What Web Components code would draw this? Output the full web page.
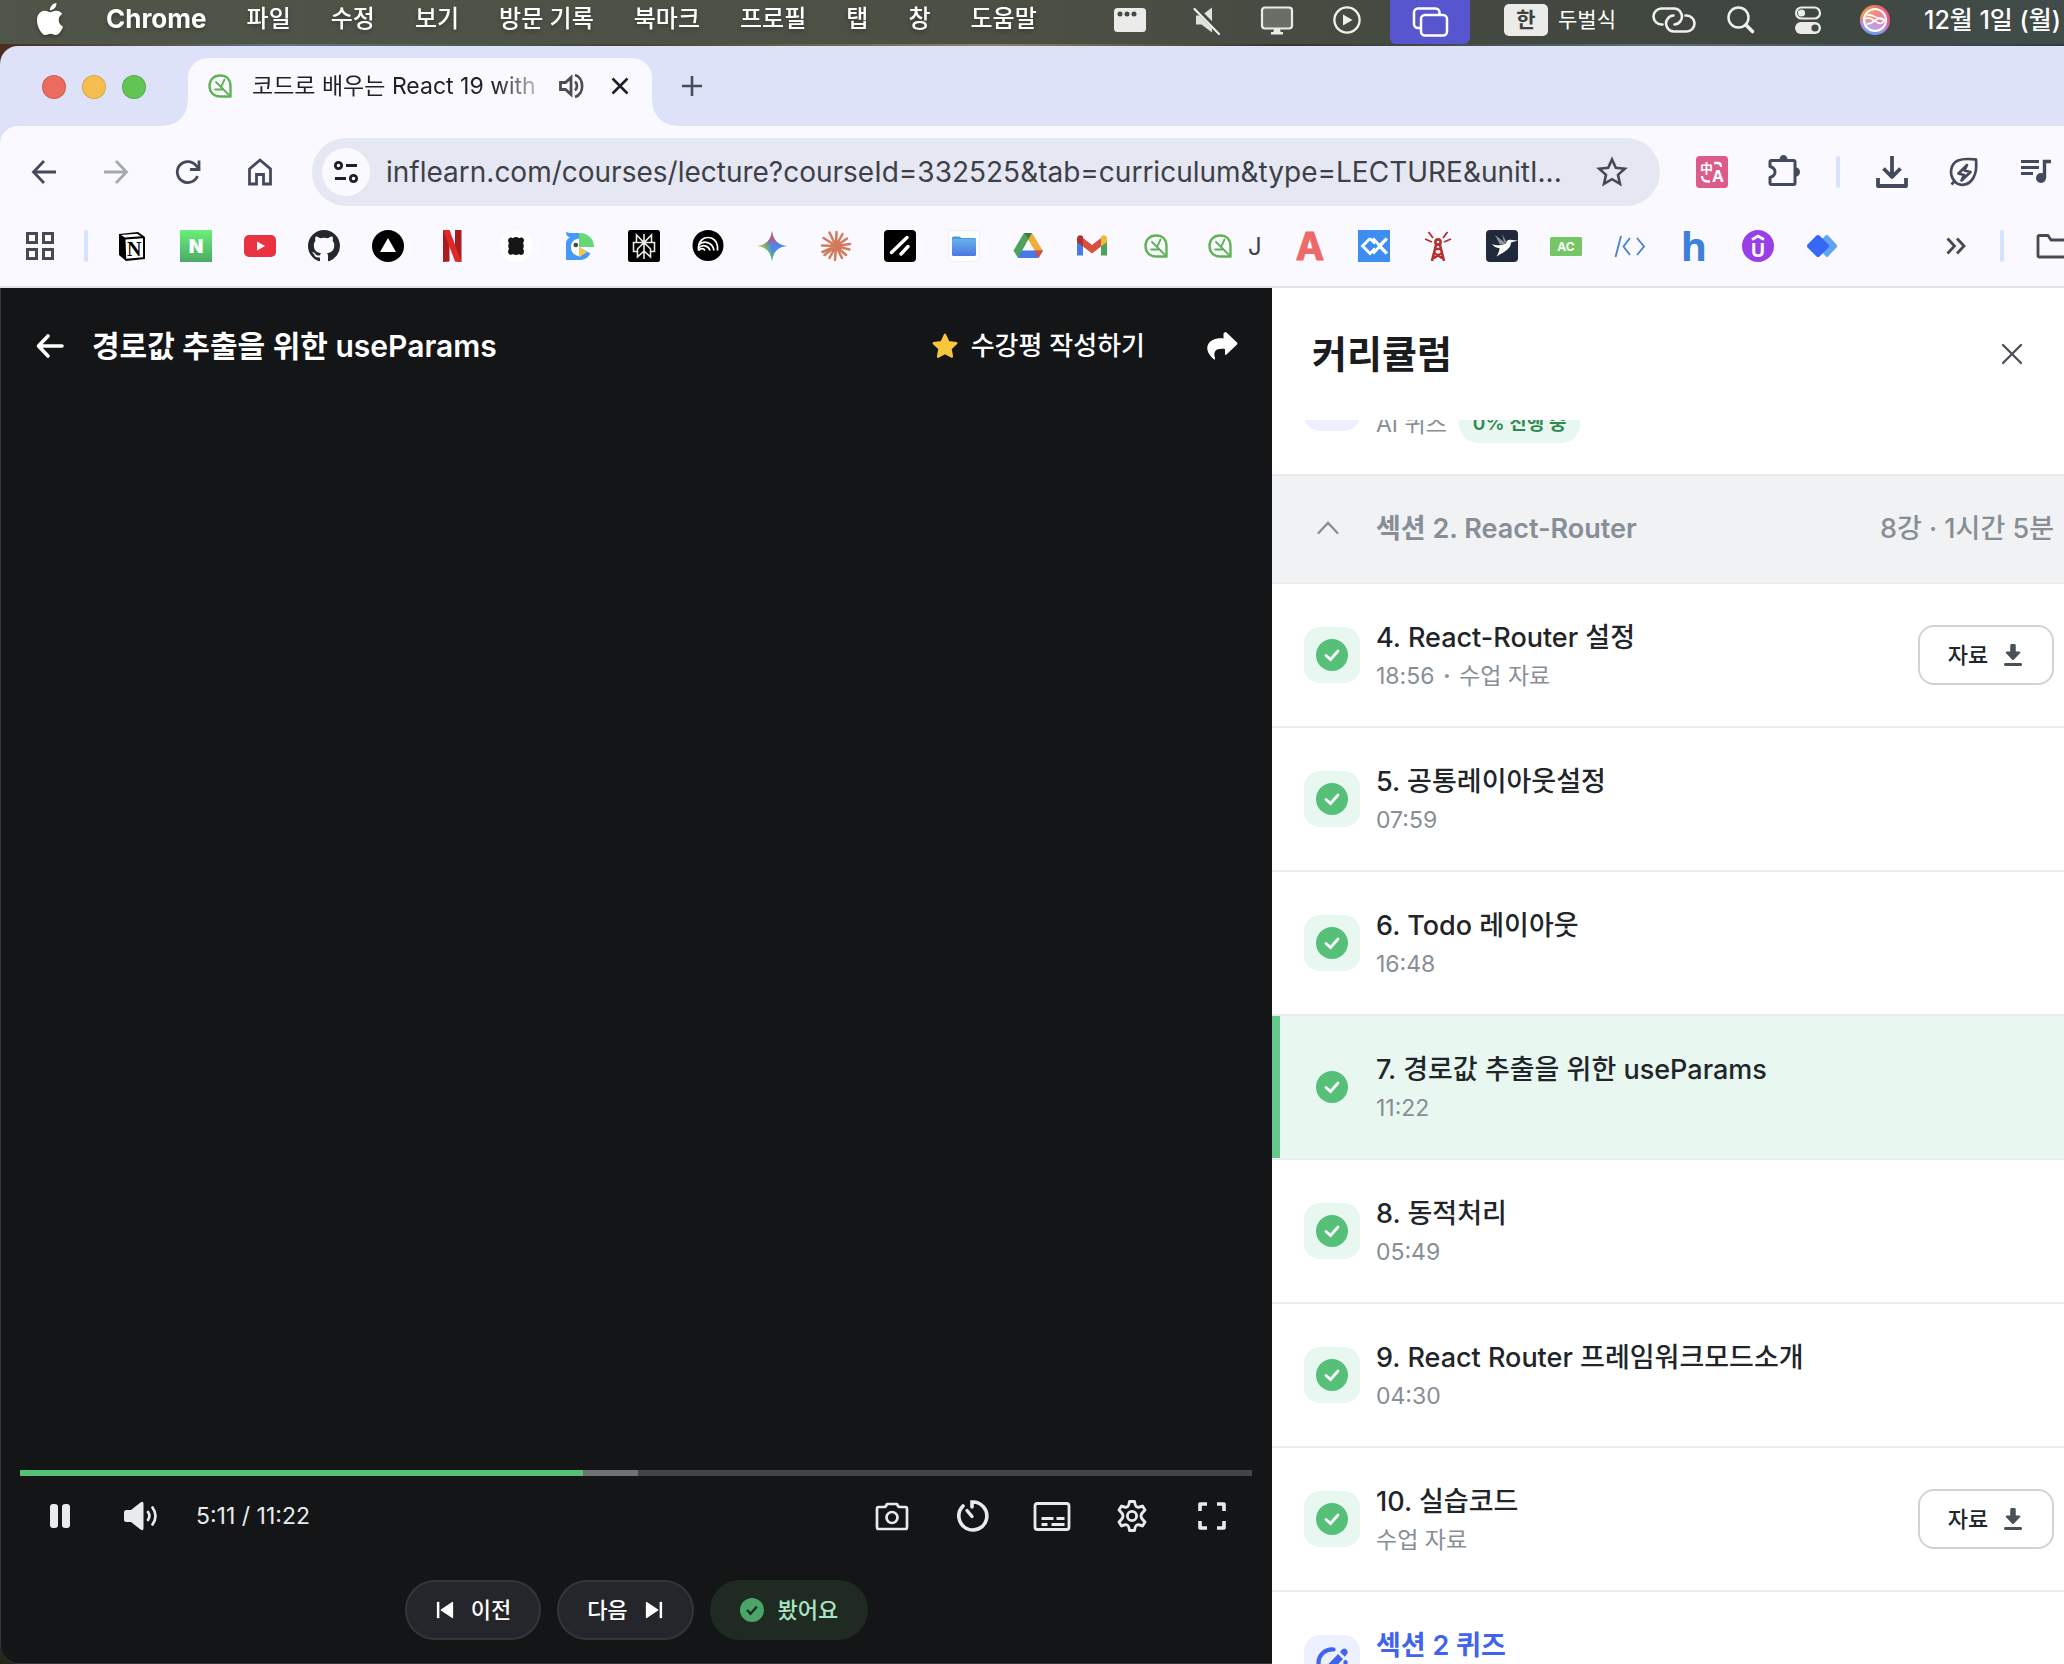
<!DOCTYPE html>
<html lang="ko">
<head>
<meta charset="utf-8">
<meta name="viewport" content="width=device-width, initial-scale=1">
<title>코드로 배우는 React 19 with</title>
<style>
  html, body { margin: 0; height: 100%; }
  body {
    overflow: hidden;
    display: flex;
    flex-direction: column;
    font-family: Inter, "Noto Sans CJK KR", sans-serif;
    background: linear-gradient(90deg, #4a2d20, #63757c 14%, #3c4630 30%, #8c8468 48%, #33352c 62%, #5f6c70 80%, #2c3c44) top / 100% 60px no-repeat, #202b17;
  }
</style>
</head>
<body>
<mac-menubar></mac-menubar>
<browser-window>
  <tab-strip slot="chrome"></tab-strip>
  <nav-toolbar slot="chrome"></nav-toolbar>
  <bookmark-bar slot="chrome"></bookmark-bar>
  <lecture-player heading="경로값 추출을 위한 useParams" current="5:11" total="11:22"></lecture-player>
  <curriculum-panel heading="커리큘럼">
    <lecture-row kind="quiz" meta="AI 퀴즈" badge="0% 진행 중"></lecture-row>
    <section-row heading="섹션 2. React-Router" info="8강 · 1시간 5분"></section-row>
    <lecture-row heading="4. React-Router 설정" meta="18:56 · 수업 자료" file></lecture-row>
    <lecture-row heading="5. 공통레이아웃설정" meta="07:59"></lecture-row>
    <lecture-row heading="6. Todo 레이아웃" meta="16:48"></lecture-row>
    <lecture-row heading="7. 경로값 추출을 위한 useParams" meta="11:22" active></lecture-row>
    <lecture-row heading="8. 동적처리" meta="05:49"></lecture-row>
    <lecture-row heading="9. React Router 프레임워크모드소개" meta="04:30"></lecture-row>
    <lecture-row heading="10. 실습코드" meta="수업 자료" file></lecture-row>
    <lecture-row kind="quiz" heading="섹션 2 퀴즈"></lecture-row>
  </curriculum-panel>
</browser-window>

<script>
const base = `
  :host, *, *::before, *::after { box-sizing: border-box; }
  button, a, input { font: inherit; color: inherit; text-decoration: none; }
  button { border: 0; padding: 0; margin: 0; background: none; cursor: pointer; white-space: nowrap; }
`;

const leaf = `<g fill="none" stroke="#5fb254" stroke-width="2.4" stroke-linejoin="round" stroke-linecap="round">
  <path d="M26.500 26.500H16C9.500 26.500 5.500 22 5.500 16S9.500 5.500 16 5.500 26.500 9.500 26.500 16z"/>
  <path d="M26 26L12 12M17 17L20.500 9.500M11 19.500h8.500" stroke-width="1.800"/></g>`;

// every drawing sits on a 32 x 32 grid
const icons = {
  apple: `<g fill="#fff" transform="scale(1.3333)"><path d="M12.152 6.896c-.948 0-2.415-1.078-3.960-1.040-2.040.027-3.910 1.183-4.961 3.014-2.117 3.675-.546 9.103 1.519 12.090 1.013 1.454 2.208 3.090 3.792 3.039 1.520-.065 2.090-.987 3.935-.987 1.831 0 2.350.987 3.960.948 1.637-.026 2.676-1.480 3.676-2.948 1.156-1.688 1.636-3.325 1.662-3.415-.039-.013-3.182-1.221-3.220-4.857-.026-3.040 2.480-4.494 2.597-4.559-1.429-2.090-3.623-2.324-4.390-2.376-2-.156-3.675 1.090-4.610 1.090zM15.530 3.830c.843-1.012 1.400-2.427 1.245-3.830-1.207.052-2.662.805-3.532 1.818-.780.896-1.454 2.338-1.273 3.714 1.338.104 2.715-.688 3.559-1.701"/></g>`,
  panel: `<rect y="4" width="32" height="24" rx="3.500" fill="#ebebe9"/><g fill="#444a41"><circle cx="6" cy="10" r="2.500"/><circle cx="13" cy="10" r="2.500"/><circle cx="20" cy="10" r="2.500"/></g>`,
  mute: `<path d="M5 11.500h5.500L21 3.500v25l-10.500-8H5z" fill="#e0e1de"/><path d="M5.500 5L29 29" stroke="#454a42" stroke-width="5"/><path d="M3.500 5L28 30" stroke="#f0f0ee" stroke-width="2.200" stroke-linecap="round"/>`,
  display: `<rect x="1" y="3.500" width="30" height="21" rx="3" fill="#6a6e67" stroke="#ebebe9" stroke-width="2.200"/><path d="M13 25h6l.6 3H22v2.500H10V28h2.400z" fill="#ebebe9"/>`,
  play: `<circle cx="16" cy="16" r="12.600" fill="none" stroke="#f0f0ee" stroke-width="2.300"/><path d="M12 10.500v11l9.500-5.500z" fill="#f0f0ee"/>`,
  windows: `<g fill="none" stroke="#fff" stroke-width="2.500"><path d="M7 22H4a4 4 0 0 1-4-4V6.500A4 4 0 0 1 4 2.500h17.500A4 4 0 0 1 25.500 6.500V9"/><rect x="7" y="9" width="26" height="20.500" rx="4"/></g>`,
  link: `<g fill="none" stroke="#f0f0ee" stroke-width="2.600" stroke-linecap="round"><path d="M4.500 20.500H3.500a8 8 0 0 1 0-16h12.500a8 8 0 0 1 6.500 12.500c-1.300 2-3.300 3.500-6 3.500"/><path d="M27.500 11.500h1a8 8 0 0 1 0 16H16A8 8 0 0 1 9.500 15c1.300-2 3.300-3.500 6-3.500"/></g>`,
  search: `<circle cx="13.500" cy="13.500" r="10" fill="none" stroke="#f0f0ee" stroke-width="2.500"/><path d="M21 21L27.500 27.500" stroke="#f0f0ee" stroke-width="3.600" stroke-linecap="round"/>`,
  toggles: `<rect x="4" y="3.500" width="24" height="11" rx="5.500" fill="none" stroke="#ebebe9" stroke-width="2.200"/><circle cx="9.500" cy="9" r="3.600" fill="#ebebe9"/><rect x="3" y="18" width="26" height="12" rx="6" fill="#ebebe9"/><circle cx="23" cy="24" r="3.600" fill="#444a41"/>`,
  siri: `<defs><linearGradient id="s" x1="0" y1="0" x2="1" y2=".3"><stop offset="0" stop-color="#f8a43c"/><stop offset=".6" stop-color="#ee6a6a"/><stop offset="1" stop-color="#f0508a"/></linearGradient><linearGradient id="b" x1=".2" y1="0" x2="0" y2="1"><stop offset=".35" stop-color="#a68cf0" stop-opacity="0"/><stop offset=".7" stop-color="#a68cf0"/><stop offset="1" stop-color="#35aef5"/></linearGradient></defs><circle cx="16" cy="16" r="15" fill="url(#s)"/><circle cx="16" cy="16" r="15" fill="url(#b)"/><circle cx="16" cy="16" r="11" fill="#fff" fill-opacity=".2" stroke="#fff" stroke-width="2.200"/><path d="M5.500 15c7-4 11 5 16 4.500 4-.5 4-5.500 0-5.500-5 0-8 7-14 6M8 11c6-1 9 4 18 5" fill="none" stroke="#fff" stroke-width="1.600"/>`,

  leaf,
  sound: `<path d="M4.500 12.500h5l5.500-5v17l-5.500-5h-5z" fill="none" stroke="#4a4c52" stroke-width="2.800" stroke-linejoin="miter"/><path d="M19 11.500c2.600 2 2.600 7 0 9M19 5c9.500 3 9.500 19 0 22" fill="none" stroke="#4a4c52" stroke-width="2.700"/>`,
  cross: `<path d="M8.500 8.500l15 15M23.500 8.500l-15 15" stroke="#1f2024" stroke-width="2.600"/>`,
  plus: `<path d="M16 6v20M6 16h20" stroke="#474b5c" stroke-width="2.600"/>`,
  back: `<path d="M28 16H6M16 5L5.500 16 16 27" fill="none" stroke="#424a5c" stroke-width="2.800"/>`,
  forward: `<path d="M4 16h22M16 5l10.500 11L16 27" fill="none" stroke="#a6a8b0" stroke-width="2.800"/>`,
  reload: `<path d="M25.500 20A10.500 10.500 0 1 1 24 9.500L26.500 12" fill="none" stroke="#424a5c" stroke-width="2.800"/><path d="M27 4.500v9H18" fill="none" stroke="#424a5c" stroke-width="2.800"/>`,
  home: `<path d="M5.500 13L16 4l10.500 9v15H19.500v-9.500h-7V28H5.500z" fill="none" stroke="#424a5c" stroke-width="2.800"/>`,
  tune: `<g fill="none" stroke="#1f2023" stroke-width="2.800"><circle cx="8.500" cy="9.500" r="3.200"/><path d="M16 9.500h11M5 22.500h11"/><circle cx="23.500" cy="22.500" r="3.200"/></g>`,
  star: `<path d="M16 3.500l3.800 8.400 9 .9-6.800 6.100 2 9L16 23.200 8 27.900l2-9-6.800-6.100 9-.9z" fill="none" stroke="#474a50" stroke-width="2.600"/>`,
  translate: `<rect width="32" height="32" rx="3.500" fill="#dd5b8b"/><g fill="#fff" font-weight="700" font-family="Noto Sans CJK KR"><text x="4" y="17" font-size="13">中</text><text x="16" y="26" font-size="16" font-family="Inter">A</text></g><path d="M18 7h4c2 0 3 1 3 4M6 20c0 4 2 5.500 6 5.500h2" fill="none" stroke="#fff" stroke-width="2.300"/>`,
  puzzle: `<path d="M3.500 4.500h22q1.500 0 1.500 1.500v21q0 1.500-1.500 1.500h-22q-1.500 0-1.500-1.500v-5.500q5-1.500 5-5.500t-5-5.500V6q0-1.500 1.500-1.500z" fill="none" stroke="#424a5c" stroke-width="3" stroke-linejoin="round"/><path d="M11.500 3.500a4 4.500 0 0 1 8 0zM28 11.500a4 4.500 0 0 1 0 9z" fill="#424a5c"/>`,
  download: `<path d="M16 0v20M7.500 12.500L16 21l8.500-8.500M2 22v8h28v-8" fill="none" stroke="#424a5c" stroke-width="3.800" stroke-linejoin="round"/>`,
  energy: `<path d="M6.500 25C1 19 2 8 10 4.500c6-2.500 13-1.500 18-1 .5 5 1 12-2.500 18C21 30 11 31 6.500 25zM7 24.500L3.500 28.500M19 9L10.500 17.500 16 19l-2.500 5.500L22.500 16l-6-1.500z" fill="none" stroke="#424a5c" stroke-width="2.700" stroke-linejoin="round"/>`,
  music: `<path d="M1 5.500h18M1 11.500h18M1 17.500h12" stroke="#424a5c" stroke-width="3"/><path d="M24.500 22V5.500H31" fill="none" stroke="#424a5c" stroke-width="3.400"/><circle cx="21" cy="22" r="5" fill="#424a5c"/>`,

  apps: `<g fill="none" stroke="#474a50" stroke-width="3"><rect x="3.500" y="3.500" width="9" height="9"/><rect x="19.500" y="3.500" width="9" height="9"/><rect x="3.500" y="19.500" width="9" height="9"/><rect x="19.500" y="19.500" width="9" height="9"/></g>`,
  notion: `<path d="M3 4l19-2 7 5v22l-19 2-7-6z" fill="#000"/><path d="M9.500 9.500L27 8.300v19L10.200 28.700z" fill="#fff"/><path d="M5 5l16-1.300 4 2.600-16 1.200z" fill="#fff"/><text x="11" y="25.500" font-family="Liberation Serif" font-weight="700" font-size="20" fill="#000">N</text>`,
  naver: `<defs><linearGradient id="g" x1="0" y1="0" x2="0" y2="1"><stop offset="0" stop-color="#6aef78"/><stop offset="1" stop-color="#4caa68"/></linearGradient></defs><rect width="32" height="32" fill="url(#g)"/><text x="16" y="23" text-anchor="middle" font-family="Inter" font-weight="900" font-size="19" fill="#fff">N</text>`,
  youtube: `<rect y="5" width="32" height="22" rx="5" fill="#ea3340"/><path d="M13 11.500v9l8-4.500z" fill="#fff"/>`,
  github: `<path transform="scale(2)" fill="#24292f" d="M8 0C3.580 0 0 3.580 0 8c0 3.540 2.290 6.530 5.470 7.590.4.070.55-.17.55-.38 0-.19-.01-.82-.01-1.490-2.010.37-2.530-.49-2.690-.94-.09-.23-.48-.94-.82-1.130-.28-.15-.68-.52-.01-.53.63-.01 1.080.58 1.230.82.72 1.210 1.870.87 2.330.66.07-.52.28-.87.51-1.070-1.780-.2-3.640-.89-3.640-3.950 0-.87.31-1.590.82-2.150-.08-.2-.36-1.020.08-2.120 0 0 .67-.21 2.200.82.64-.18 1.320-.27 2-.27s1.360.09 2 .27c1.530-1.040 2.200-.82 2.200-.82.44 1.100.16 1.920.08 2.120.51.56.82 1.270.82 2.150 0 3.070-1.870 3.750-3.650 3.950.29.25.54.73.54 1.480 0 1.070-.01 1.930-.01 2.200 0 .21.15.46.55.38A8.010 8.010 0 0 0 16 8c0-4.420-3.580-8-8-8z"/>`,
  vercel: `<circle cx="16" cy="16" r="16" fill="#000"/><path d="M16 8l8 14H8z" fill="#fff"/>`,
  netflix: `<path d="M7 0h6.500v31.500L7 32zM19 0h6.500v32L19 31.500z" fill="#a81b1f"/><path d="M7 0h6.500l12 32L19 31.300z" fill="#dd2a27"/>`,
  flower: `<circle cx="16" cy="16" r="16" fill="#fff"/><path d="M8.500 9c1-2 3-2 4.500-.8 1.500-1.500 4.500-1.500 6 0C20.500 7 23 7 23.700 9c.8 2-.2 3-.7 4 1 2 1 4 0 6 .8 1 1.500 3 .5 4.500-1.200 2-3.500 1.500-4.500.5-1.500 1.300-4.500 1.300-6 0-1.500 1.200-4 1-4.700-1-.6-1.600 0-3 .7-4-1-2-1-4 0-6-1-1-1.200-2.600-.5-4z" fill="#161616"/>`,
  parrot: `<path d="M2 2c4 1.500 8 1 13 1v14l11.500 6.500c-3 5-7 6.500-11.500 6.500H2V13c0-3 2-4.500 4-5.500C3.500 7 2 5 2 2z" fill="#4699fa"/><path d="M15.500 8.500C3.500 9 4.500 25.500 15.500 26z" fill="#fff"/><path d="M15 3c9 0 15 6 15 14H15z" fill="#66d874"/><path d="M15 17l8 5-8 5.500z" fill="#f6c545"/><circle cx="11.800" cy="15" r="2.300" fill="#3f4656"/>`,
  perplexity: `<rect width="32" height="32" rx="2.500" fill="#000"/><path d="M16 4v25M8.500 5v7.500h15V5L16 12.500zM9.500 21.500H5.500v-9h21v9h-4M16 12.500l-6.500 6.500v8l6.500-6 6.500 6v-8z" fill="none" stroke="#e8e8e4" stroke-width="1.600"/>`,
  arcs: `<circle cx="16" cy="15.500" r="15.500" fill="#000"/><g fill="none" stroke="#fff" stroke-width="1.700"><path d="M6.500 20.500v-4c1-12 18-12 19 0v4"/><path d="M6.500 15c5-5 14-3 15.500 5.500"/><path d="M6.500 18c4-4 10-2.500 11.500 2.500"/><path d="M6.500 20.500c2-2.500 5-2.500 6.500 0"/></g>`,
  gemini: `<defs><linearGradient id="m" x1=".1" y1=".7" x2=".9" y2=".4"><stop offset="0" stop-color="#f0c23b"/><stop offset=".32" stop-color="#6db27a"/><stop offset=".5" stop-color="#4a87ee"/><stop offset="1" stop-color="#4a87ee"/></linearGradient><linearGradient id="r" x1="0" y1="0" x2="0" y2="1"><stop offset=".1" stop-color="#e64a40"/><stop offset=".5" stop-color="#e64a40" stop-opacity="0"/><stop offset=".65" stop-color="#4fae62" stop-opacity="0"/><stop offset="1" stop-color="#4fae62"/></linearGradient></defs><path d="M16 1c1 9 6 14 15 15-9 1-14 6-15 15-1-9-6-14-15-15C10 15 15 10 16 1z" fill="url(#m)"/><path d="M16 1c1 9 6 14 15 15-9 1-14 6-15 15-1-9-6-14-15-15C10 15 15 10 16 1z" fill="url(#r)"/>`,
  claude: `<g stroke="#d17b5c" stroke-width="2.500" stroke-linecap="round"><path d="M16 16L16.500 2M16 16l6.500-12M16 16l11-7.500M16 16l14-2M16 16l13.500 3.500M16 16l10 9M16 16l6 12M16 16l-1 14M16 16l-6.500 12M16 16L4.500 25M16 16L2.500 22M16 16l-14-.5M16 16L3.500 8M16 16L9.500 2.500"/></g>`,
  slash: `<rect width="32" height="32" rx="4" fill="#000"/><path d="M7.500 22.500L23 7.500M17 24l7-7.500" stroke="#fff" stroke-width="3.400" stroke-linecap="round"/>`,
  files: `<rect x=".5" y=".5" width="31" height="31" rx="4" fill="#fff" stroke="#eeeef3"/><defs><linearGradient id="f" x1="0" y1="0" x2="0" y2="1"><stop offset="0" stop-color="#66b0ea"/><stop offset="1" stop-color="#4a78e2"/></linearGradient></defs><path d="M4 8a1.500 1.500 0 0 1 1.500-1.500h6L13.500 8h13A1.500 1.500 0 0 1 28 9.500V13H4z" fill="#4a9ad6"/><rect x="4" y="9" width="24" height="17" rx="1.500" fill="url(#f)"/>`,
  drive: `<path d="M12 3h8l11 18h-8z" fill="#eeae3d"/><path d="M12 3l4 7L6 28 1.500 20.500z" fill="#4da25c"/><path d="M9.500 20.500H31L26.500 28H6z" fill="#467be6"/><path d="M12 3h8l-4 7z" fill="#3a7d48"/><path d="M22.500 20.500H31L26.500 28z" fill="#d9503f"/>`,
  gmail: `<path d="M1 8v17.500h6V13z" fill="#467be6"/><path d="M31 8v17.500h-6V13z" fill="#4da25c"/><path d="M7 8l9 7 9-7v8.500l-9 7-9-7z" fill="#d9503f"/><path d="M1 9c0-4 3.500-4.500 6-2.500v10L1 12z" fill="#b3312c"/><path d="M31 9c0-4-3.500-4.500-6-2.500v10l6-4.500z" fill="#eeb93d"/>`,
  letter: `<text x="16" y="30" text-anchor="middle" font-family="Inter" font-weight="700" font-size="38" fill="#ee6a68" stroke="#ee6a68" stroke-linejoin="round">A</text>`,
  diamonds: `<rect width="32" height="32" fill="#3e8ef2"/><path d="M12 8.500L4.500 16l7.500 7.500 5-5M12 8.500l5 5M28.500 8.500L21 16l7.500 7.500M15 8.500l14 15M15 23.500l14-15" fill="none" stroke="#fff" stroke-width="2.800"/>`,
  tower: `<g stroke="#b3302f" fill="none" stroke-width="2.600"><path d="M14.500 13L10 31M17.500 13L22 31M13 19h6M12 23l8 5M20 23l-8 5"/><circle cx="16" cy="12" r="2.600"/><path d="M11 8L6.500 2M21 8l4.500-6M10 12L3 9M22 12l7-3" stroke-width="1.900"/></g>`,
  bird: `<rect width="32" height="32" rx="4" fill="#202a3c"/><path d="M6 14c4 2 9 1.500 14-.5 0-3 3-4.500 5.500-3.500l6.500.5-7 2c0 6-6 9-14.500 14 2-3.500 3-6 3-8.500-3 0-6-1.500-7.500-4z" fill="#fff"/><path d="M9 5l11 8.500-6 1zM16 4l5 9-3-1z" fill="#8e95a2"/>`,
  ac: `<rect y="7" width="32" height="19" rx="1.500" fill="#76c566"/><text x="16" y="21" text-anchor="middle" font-family="Inter" font-weight="700" font-size="12" fill="#fff">AC</text>`,
  code: `<path d="M7 6L1.500 27M16 8l-6.500 8.500L16 25M23 8l7 8.500L23 25" fill="none" stroke="#4a86cc" stroke-width="1.900"/>`,
  hlogo: `<text x="16" y="31" text-anchor="middle" font-family="Open Sans" font-weight="700" font-size="40" fill="#3d80d9">h</text>`,
  ulogo: `<circle cx="16" cy="16" r="16" fill="#983fe8"/><path d="M10 9.500L16 6l6 3.500" fill="none" stroke="#fff" stroke-width="2.800"/><text x="16" y="27" text-anchor="middle" font-family="Inter" font-weight="700" font-size="19" fill="#fff">U</text>`,
  gems: `<path d="M20 5q1-.5 2 .5l8.500 9q1 1.500 0 3l-8.500 9q-1 1-2 0l-5-5V10z" fill="#5ea4f0"/><path d="M10.500 5.500q1.500-1 3 0l9 9q1 1.500 0 3l-9 9q-1.500 1-3 0l-9-9q-1-1.500 0-3z" fill="#3668f5"/>`,
  more: `<path d="M7.500 8.500L14.500 16l-7 7.500M17 8.500L24 16l-7 7.500" fill="none" stroke="#474a50" stroke-width="2.800"/>`,
  folder: `<path d="M2 7q0-1.500 1.500-1.500H12l3 4.500h23v17H3.500Q2 27 2 25.500z" fill="none" stroke="#474a50" stroke-width="2.800" stroke-linejoin="round"/>`,

  arrow: `<path d="M28 16H5.500M14 6L4.500 16 14 26" fill="none" stroke="#fff" stroke-width="3.600" stroke-linecap="round" stroke-linejoin="round"/>`,
  rate: `<path d="M16 3l4 8.600 9 1.200-6.600 6.300 1.600 9.200L16 24l-8 4.300 1.600-9.200L3 12.800l9-1.200z" fill="#f8c63d" stroke="#f8c63d" stroke-width="2.500" stroke-linejoin="round"/>`,
  share: `<path d="M19.500 2.500q1-1 2 0L32 12.500q1 1 0 2L21.500 24.500q-1.500 1-1.500-.5v-5c-9-1-12 2-10 9 .5 1.500-.5 2-1.500 1C-4 18 4 7 18.500 8.500V3.500z" fill="#fff"/>`,
  pause: `<rect x="6" y="4" width="8" height="24" rx="3" fill="#e9eaee"/><rect x="18" y="4" width="8" height="24" rx="3" fill="#e9eaee"/>`,
  volume: `<path d="M2.500 10H7l9.500-7.500q3-2 3 1.500v24q0 3.500-3 1.500L7 22H2.500Q0 22 0 19.500v-7Q0 10 2.500 10z" fill="#e9eaee"/><path d="M24 12q2.800 4 0 8M28.500 7.500q6 8.500 0 17" fill="none" stroke="#e9eaee" stroke-width="2.700" stroke-linecap="round"/>`,
  camera: `<path d="M2.500 7H8q2 0 3-3h10q1 3 3 3h5.500q1.500 0 1.500 2v18q0 2-1.500 2H2.500Q1 29 1 27V9q0-2 1.500-2z" fill="none" stroke="#e9eaee" stroke-width="2.700" stroke-linejoin="round"/><circle cx="16" cy="17.500" r="5.500" fill="none" stroke="#e9eaee" stroke-width="2.700"/>`,
  timer: `<path d="M7 6A14 14 0 1 0 16 2v5" fill="none" stroke="#e9eaee" stroke-width="3.600" stroke-linecap="round"/><path d="M11 10.500l5 6" stroke="#e9eaee" stroke-width="3.400" stroke-linecap="round"/>`,
  caption: `<rect x="-1" y="3.500" width="34" height="26" rx="2.500" fill="none" stroke="#e9eaee" stroke-width="2.800"/><path d="M5.500 18.500h12M20.500 18.500h8M5.500 24.500h6M15.500 24.500h13" stroke="#e9eaee" stroke-width="2.800"/>`,
  gear: `<path d="M13.500 1.500h5q.8 5 2.500 5.500c1.500.8 3 0 5.500-1L29 10c-3.500 3.500-4 4-4 6s.5 2.500 4 6l-2.500 4c-2.500-1-4-1.800-5.500-1-1.700.5-2.500 5.500-2.500 5.500h-5S12.700 25.500 11 25c-1.500-.8-3 0-5.500 1L3 22c3.500-3.500 4-4 4-6s-.5-2.500-4-6l2.500-4c2.500 1 4 1.800 5.500 1 1.700-.5 2.500-5.500 2.500-5.500z" fill="none" stroke="#e9eaee" stroke-width="2.800" stroke-linejoin="round"/><circle cx="16" cy="16" r="4.600" fill="none" stroke="#e9eaee" stroke-width="2.800"/>`,
  full: `<path d="M4 11V4h7M21 4h7v7M28 21v7h-7M11 28H4v-7" fill="none" stroke="#e9eaee" stroke-width="3.600" stroke-linejoin="round"/>`,
  prev: `<path d="M5 3v26" stroke="#fff" stroke-width="4"/><path d="M28 4v24L10 16z" fill="#fff" stroke="#fff" stroke-width="2" stroke-linejoin="round"/>`,
  next: `<path d="M27 3v26" stroke="#fff" stroke-width="4"/><path d="M4 4v24l18-12z" fill="#fff" stroke="#fff" stroke-width="2" stroke-linejoin="round"/>`,
  seen: `<circle cx="16" cy="16" r="16" fill="#4aa567"/><path d="M9.500 16l4.500 5 8.500-9.500" fill="none" stroke="#1e2a22" stroke-width="3"/>`,
  check: `<circle cx="16" cy="16" r="16" fill="#56c078"/><path d="M10 16.500l4.500 4L22 12" fill="none" stroke="#fff" stroke-width="2.800" stroke-linecap="round"/>`,
  close: `<path d="M7 7l18 18M25 7L7 25" stroke="#4a4f57" stroke-width="2.300" stroke-linecap="round"/>`,
  up: `<path d="M6.500 20L16 10l9.500 10" fill="none" stroke="#868e96" stroke-width="2.300" stroke-linecap="round"/>`,
  save: `<path d="M12 2q0-2 2-2h4q2 0 2 2v9h5q3 0 1 2.500l-8.500 9q-1.500 1.500-3 0l-8.500-9Q4 11 7 11h5z" fill="#495057"/><rect x="3" y="27.500" width="26" height="4.500" rx="2" fill="#495057"/>`,
  quiz: `<path d="M17.500 2.500A13.500 13.500 0 1 0 29.500 15" fill="none" stroke="#4263eb" stroke-width="4.200" stroke-linecap="round"/><path d="M11.500 18L22 7l5 5-10.500 11-6 1.500zM24 5l2-2.500q2.500-2 4.500 0t.5 4.500L28.800 9.800z" fill="#4263eb"/>`
};

class UiIcon extends HTMLElement {
  constructor() {
    super();
    this.attachShadow({ mode: 'open' });
  }

  connectedCallback() {
    const size = this.getAttribute('size') || 32;
    this.shadowRoot.innerHTML = `
      <style>
        :host { display: block; flex: none; width: ${size}px; height: ${size}px; }
        svg { display: block; width: 100%; height: 100%; overflow: visible; }
      </style>
      <svg viewBox="0 0 32 32" aria-hidden="true">${icons[this.getAttribute('name')]}</svg>
    `;
  }
}

class MacMenubar extends HTMLElement {
  constructor() {
    super();
    this.attachShadow({ mode: 'open' });
  }

  connectedCallback() {
    const menus = ['파일', '수정', '보기', '방문 기록', '북마크', '프로필', '탭', '창', '도움말'];
    const cell = (name, label, cls = '') => `<button class="cell ${cls}" aria-label="${label}"><ui-icon name="${name}"></ui-icon></button>`;
    this.shadowRoot.innerHTML = `
      <style>
        ${base}
        :host {
          display: flex;
          flex: none;
          height: 44px;
          margin-bottom: 2px;
          overflow: hidden;
          color: #fff;
          font-size: 24px;
          font-weight: 500;
          line-height: 36px;
          background: linear-gradient(90deg, #50554a, #4b4f44 50%, #3f463f 85%, #414c4a);
        }
        nav, .status { display: flex; align-items: center; flex: none; }
        nav { padding-left: 34px; gap: 40px; height: 38px; }
        nav button, nav ui-icon { filter: drop-shadow(0 2px 2px rgba(0, 0, 0, .3)); }
        .app { font-size: 26px; font-weight: 700; }
        .status { margin-left: auto; height: 40px; }
        .cell { display: grid; place-items: center; width: 70px; height: 40px; }
        .first { width: 84px; }
        .near { width: 67px; }
        .share {
          width: 80px;
          height: 44px;
          margin: 0 34px 0 8px;
          align-self: flex-start;
          border-radius: 0 0 6px 6px;
          background: #5856ce;
        }
        .input { display: flex; align-items: center; gap: 10px; margin-right: 24px; font-size: 21px; font-weight: 400; }
        .input b { width: 44px; height: 32px; border-radius: 5px; line-height: 32px; background: #ebebe9; color: #3d423b; font-weight: 600; }
        .time { width: 156px; padding-left: 16px; overflow: hidden; text-align: left; font-size: 25px; }
      </style>
      <nav>
        <ui-icon name="apple"></ui-icon>
        <button class="app">Chrome</button>
        ${menus.map(m => `<button>${m}</button>`).join('')}
      </nav>
      <div class="status">
        ${cell('panel', '패널', 'first')}${cell('mute', '음소거')}${cell('display', '디스플레이')}${cell('play', '재생')}
        ${cell('windows', '화면 공유', 'share')}
        <button class="input"><b>한</b><span>두벌식</span></button>
        ${cell('link', '연결', 'near')}${cell('search', '검색', 'near')}${cell('toggles', '제어 센터', 'near')}${cell('siri', 'Siri', 'near')}
        <button class="time">12월 1일 (월)</button>
      </div>
    `;
  }
}

class BrowserWindow extends HTMLElement {
  constructor() {
    super();
    this.attachShadow({ mode: 'open' }).innerHTML = `
      <style>
        :host {
          display: flex;
          flex: 1;
          flex-direction: column;
          min-height: 0;
          overflow: hidden;
          border-radius: 18px 0 0 18px;
        }
        .page { display: flex; flex: 1; min-height: 0; border-top: 2px solid #e1e1ec; background: #141517; }
      </style>
      <slot name="chrome"></slot>
      <div class="page"><slot></slot></div>
    `;
  }
}

class TabStrip extends HTMLElement {
  constructor() {
    super();
    this.attachShadow({ mode: 'open' });
  }

  connectedCallback() {
    this.shadowRoot.innerHTML = `
      <style>
        ${base}
        :host { display: flex; flex: none; height: 80px; padding: 12px 0 0 42px; background: #dde2f8; }
        .lights { display: flex; gap: 16px; padding-top: 17px; width: 146px; flex: none; }
        .lights button { width: 24px; height: 24px; border-radius: 50%; border: 1px solid rgba(0, 0, 0, .12); }
        .red { background: #ec6a5e; }
        .yellow { background: #f4bf4f; }
        .green { background: #61c554; }
        .tab {
          position: relative;
          display: flex;
          align-items: center;
          width: 464px;
          height: 68px;
          padding: 0 16px 12px;
          border-radius: 20px 20px 0 0;
          background: #faf9ff;
        }
        .tab::before, .tab::after {
          content: "";
          position: absolute;
          bottom: 0;
          width: 24px;
          height: 24px;
          background: radial-gradient(circle at 0 0, transparent 23px, #faf9ff 24px);
        }
        .tab::before { right: 100%; }
        .tab::after { left: 100%; background: radial-gradient(circle at 100% 0, transparent 23px, #faf9ff 24px); }
        .name {
          flex: 1;
          min-width: 0;
          margin: 0 14px 0 16px;
          overflow: hidden;
          white-space: nowrap;
          font-size: 23px;
          line-height: 32px;
          color: #1f2024;
          -webkit-mask: linear-gradient(90deg, #000 84%, rgba(0, 0, 0, .2));
          mask: linear-gradient(90deg, #000 84%, rgba(0, 0, 0, .2));
        }
        .shut { margin-left: 16px; }
        .add { display: grid; place-items: center; width: 80px; height: 56px; }
      </style>
      <div class="lights">
        <button class="red" aria-label="닫기"></button>
        <button class="yellow" aria-label="최소화"></button>
        <button class="green" aria-label="확대"></button>
      </div>
      <div class="tab">
        <ui-icon name="leaf"></ui-icon>
        <span class="name">코드로 배우는 React 19 with</span>
        <ui-icon name="sound"></ui-icon>
        <button class="shut" aria-label="탭 닫기"><ui-icon name="cross"></ui-icon></button>
      </div>
      <button class="add" aria-label="새 탭"><ui-icon name="plus"></ui-icon></button>
    `;
  }
}

class NavToolbar extends HTMLElement {
  constructor() {
    super();
    this.attachShadow({ mode: 'open' });
  }

  connectedCallback() {
    const tool = (name, label) => `<button class="tool" aria-label="${label}"><ui-icon name="${name}"></ui-icon></button>`;
    this.shadowRoot.innerHTML = `
      <style>
        ${base}
        :host { display: block; flex: none; overflow: hidden; background: #dde2f8; }
        .bar {
          display: flex;
          align-items: center;
          width: calc(100% + 8px);
          padding: 12px 0 8px 8px;
          border-radius: 18px 0 0 0;
          background: #faf9ff;
        }
        .tool { display: grid; place-items: center; flex: none; width: 72px; height: 68px; }
        .url {
          display: flex;
          align-items: center;
          flex: 1;
          min-width: 0;
          height: 68px;
          margin: 0 16px;
          padding: 0 12px 0 10px;
          border-radius: 34px;
          background: #e5e8f2;
        }
        .site { display: grid; place-items: center; flex: none; width: 48px; height: 48px; border-radius: 50%; background: #faf9ff; }
        input {
          flex: 1;
          min-width: 0;
          height: 48px;
          margin: 0 8px 0 16px;
          padding: 0;
          border: 0;
          outline: 0;
          background: none;
          font-size: 28px;
          color: #3d4046;
        }
        i { flex: none; width: 4px; height: 32px; margin: 0 16px; border-radius: 2px; background: #d6e2fb; }
      </style>
      <div class="bar">
        ${tool('back', '뒤로')}${tool('forward', '앞으로')}${tool('reload', '새로고침')}${tool('home', '홈')}
        <div class="url">
          <button class="site" aria-label="사이트 정보"><ui-icon name="tune"></ui-icon></button>
          <input type="text" aria-label="주소창" value="inflearn.com/courses/lecture?courseId=332525&amp;tab=curriculum&amp;type=LECTURE&amp;unitI...">
          ${tool('star', '북마크')}
        </div>
        ${tool('translate', '번역')}${tool('puzzle', '확장 프로그램')}
        <i></i>
        ${tool('download', '다운로드')}${tool('energy', '절전')}${tool('music', '미디어')}
      </div>
    `;
  }
}

class BookmarkBar extends HTMLElement {
  constructor() {
    super();
    this.attachShadow({ mode: 'open' });
  }

  connectedCallback() {
    const before = ['notion', 'naver', 'youtube', 'github', 'vercel', 'netflix', 'flower', 'parrot', 'perplexity', 'arcs',
      'gemini', 'claude', 'slash', 'files', 'drive', 'gmail', 'leaf'];
    const after = ['letter', 'diamonds', 'tower', 'bird', 'ac', 'code', 'hlogo', 'ulogo', 'gems'];
    const mark = name => `<a href="#" aria-label="${name}"><ui-icon name="${name}"></ui-icon></a>`;
    this.shadowRoot.innerHTML = `
      <style>
        ${base}
        :host { display: flex; flex: none; align-items: center; height: 72px; padding: 0 0 8px 8px; overflow: hidden; background: #faf9ff; }
        a, button { display: grid; place-items: center; flex: none; width: 64px; height: 48px; }
        .named { display: flex; width: 90px; padding-left: 16px; gap: 12px; font-size: 24px; color: #3d4046; }
        i { flex: none; width: 4px; height: 32px; margin: 0 12px; border-radius: 2px; background: #d6e2fb; }
        .more { margin-left: auto; }
        .end { width: 48px; padding-left: 20px; place-items: center start; }
      </style>
      <button aria-label="앱"><ui-icon name="apps"></ui-icon></button>
      <i></i>
      ${before.map(mark).join('')}
      <a href="#" class="named"><ui-icon name="leaf"></ui-icon>J</a>
      ${after.map(mark).join('')}
      <button class="more" aria-label="더보기"><ui-icon name="more"></ui-icon></button>
      <i></i>
      <button class="end" aria-label="모든 북마크"><ui-icon name="folder"></ui-icon></button>
    `;
  }
}

class LecturePlayer extends HTMLElement {
  constructor() {
    super();
    this.attachShadow({ mode: 'open' });
  }

  connectedCallback() {
    const control = (name, label) => `<button class="control" aria-label="${label}"><ui-icon name="${name}"></ui-icon></button>`;
    this.shadowRoot.innerHTML = `
      <style>
        ${base}
        :host {
          display: flex;
          flex: 1;
          flex-direction: column;
          min-width: 0;
          border: solid #35373a;
          border-width: 0 0 1px 1px;
          border-radius: 0 0 0 18px;
          background: #141517;
          color: #fff;
        }
        header { display: flex; align-items: center; height: 116px; padding: 0 35px 0 33px; }
        h1 { flex: 1; margin: 0 0 0 26px; font-size: 30px; font-weight: 600; line-height: 44px; }
        .review { display: flex; align-items: center; gap: 12px; margin-right: 60px; font-size: 26px; font-weight: 500; line-height: 40px; }
        .stage { flex: 1; }
        input {
          appearance: none;
          display: block;
          width: auto;
          height: 6px;
          margin: 0 20px 0 19px;
          outline: 0;
          background: linear-gradient(90deg, #56c078 45.7%, #707173 45.7% 50.2%, #434446 50.2%);
        }
        input::-webkit-slider-thumb { appearance: none; width: 0; height: 6px; }
        .controls { display: flex; align-items: center; height: 80px; padding: 0 20px 0 19px; }
        .control { display: grid; place-items: center; width: 80px; height: 80px; }
        .time { flex: 1; padding-left: 16px; font-size: 23px; line-height: 36px; color: #e9eaee; }
        footer { display: flex; justify-content: center; gap: 16px; padding: 24px 0 23px; }
        footer button {
          display: flex;
          align-items: center;
          height: 60px;
          padding: 0 28px;
          gap: 16px;
          border: 2px solid #34353b;
          border-radius: 30px;
          background: #25262b;
          font-size: 22px;
          font-weight: 500;
          line-height: 32px;
        }
        footer .done { gap: 14px; border-color: #1e2a22; background: #1e2a22; color: #a9e6c0; }
      </style>
      <header>
        <button aria-label="뒤로"><ui-icon name="arrow"></ui-icon></button>
        <h1>${this.getAttribute('heading')}</h1>
        <button class="review"><ui-icon name="rate" size="28"></ui-icon>수강평 작성하기</button>
        <button aria-label="공유"><ui-icon name="share"></ui-icon></button>
      </header>
      <div class="stage"></div>
      <input type="range" aria-label="재생 위치" min="0" max="682" value="311">
      <div class="controls">
        ${control('pause', '일시정지')}${control('volume', '음량')}
        <span class="time">${this.getAttribute('current')} / ${this.getAttribute('total')}</span>
        ${control('camera', '캡처')}${control('timer', '배속')}${control('caption', '자막')}${control('gear', '설정')}${control('full', '전체 화면')}
      </div>
      <footer>
        <button><ui-icon name="prev" size="20"></ui-icon>이전</button>
        <button>다음<ui-icon name="next" size="20"></ui-icon></button>
        <button class="done"><ui-icon name="seen" size="24"></ui-icon>봤어요</button>
      </footer>
    `;
  }
}

class CurriculumPanel extends HTMLElement {
  constructor() {
    super();
    this.attachShadow({ mode: 'open' });
  }

  connectedCallback() {
    this.shadowRoot.innerHTML = `
      <style>
        ${base}
        :host { display: flex; flex: 0 0 792px; flex-direction: column; background: #fff; }
        header { display: flex; align-items: center; justify-content: space-between; flex: none; height: 132px; padding: 0 36px 0 40px; }
        h2 { margin: 0; font-size: 38px; font-weight: 700; line-height: 56px; color: #1b1c1e; }
        .list { flex: 1; min-height: 0; overflow: hidden; }
      </style>
      <header>
        <h2>${this.getAttribute('heading')}</h2>
        <button aria-label="닫기"><ui-icon name="close"></ui-icon></button>
      </header>
      <div class="list"><slot></slot></div>
    `;
  }

  scrollList(top) {
    this.shadowRoot.querySelector('.list').scrollTop = top;
  }
}

class SectionRow extends HTMLElement {
  constructor() {
    super();
    this.attachShadow({ mode: 'open' });
  }

  connectedCallback() {
    this.shadowRoot.innerHTML = `
      <style>
        ${base}
        :host { display: block; border-bottom: 2px solid #e9ebef; background: #f1f2f4; }
        button {
          display: flex;
          align-items: center;
          width: 100%;
          height: 106px;
          padding: 0 10px 0 40px;
          gap: 32px;
          font-size: 27px;
          font-weight: 600;
          line-height: 40px;
          color: #868e96;
        }
        .info { margin-left: auto; font-weight: 500; }
      </style>
      <button aria-expanded="true">
        <ui-icon name="up"></ui-icon>
        <span>${this.getAttribute('heading')}</span>
        <span class="info">${this.getAttribute('info')}</span>
      </button>
    `;
  }
}

class LectureRow extends HTMLElement {
  constructor() {
    super();
    this.attachShadow({ mode: 'open' });
  }

  connectedCallback() {
    const quiz = this.getAttribute('kind') === 'quiz';
    const badge = this.getAttribute('badge');
    const meta = (this.getAttribute('meta') || '').replace('·', '<b>·</b>');
    this.shadowRoot.innerHTML = `
      <style>
        ${base}
        :host {
          display: flex;
          align-items: center;
          gap: 16px;
          height: 144px;
          padding: 0 10px 0 32px;
          border-bottom: 2px solid #e9ebef;
          background: #fff;
        }
        :host([active]) { background: #e8f7f0; box-shadow: inset 8px 0 #66c98b; }
        .mark { display: grid; place-items: center; flex: none; width: 56px; height: 56px; border-radius: 16px; background: #e8f7f0; }
        .mark.quiz { background: #edf1ff; }
        .text { flex: 1; min-width: 0; padding-top: 2px; }
        a { display: block; min-height: 40px; font-size: 27px; font-weight: 500; line-height: 40px; color: #212529; }
        a.quiz { font-weight: 600; color: #4263eb; }
        .meta { display: flex; align-items: center; gap: 12px; height: 36px; font-size: 23px; line-height: 36px; color: #868e96; }
        .meta b { margin: 0 2px; }
        .badge { padding: 0 14px; border-radius: 19px; font-size: 19px; font-weight: 600; line-height: 38px; color: #2f8a50; background: #e8f7f0; }
        .file {
          display: flex;
          align-items: center;
          justify-content: center;
          gap: 14px;
          width: 136px;
          height: 60px;
          border: 2px solid #ced4da;
          border-radius: 16px;
          background: #fff;
          font-size: 22px;
          font-weight: 500;
          line-height: 32px;
          color: #212529;
        }
      </style>
      <div class="mark ${quiz ? 'quiz' : ''}"><ui-icon name="${quiz ? 'quiz' : 'check'}"></ui-icon></div>
      <div class="text">
        <a href="#" class="${quiz ? 'quiz' : ''}">${this.getAttribute('heading') || ''}</a>
        <div class="meta"><span>${meta}</span>${badge ? `<span class="badge">${badge}</span>` : ''}</div>
      </div>
      ${this.hasAttribute('file') ? '<button class="file">자료<ui-icon name="save" size="22"></ui-icon></button>' : ''}
    `;
  }
}

customElements.define('ui-icon', UiIcon);
customElements.define('mac-menubar', MacMenubar);
customElements.define('browser-window', BrowserWindow);
customElements.define('tab-strip', TabStrip);
customElements.define('nav-toolbar', NavToolbar);
customElements.define('bookmark-bar', BookmarkBar);
customElements.define('lecture-player', LecturePlayer);
customElements.define('curriculum-panel', CurriculumPanel);
customElements.define('section-row', SectionRow);
customElements.define('lecture-row', LectureRow);

document.querySelector('curriculum-panel').scrollList(88);
</script>
</body>
</html>
